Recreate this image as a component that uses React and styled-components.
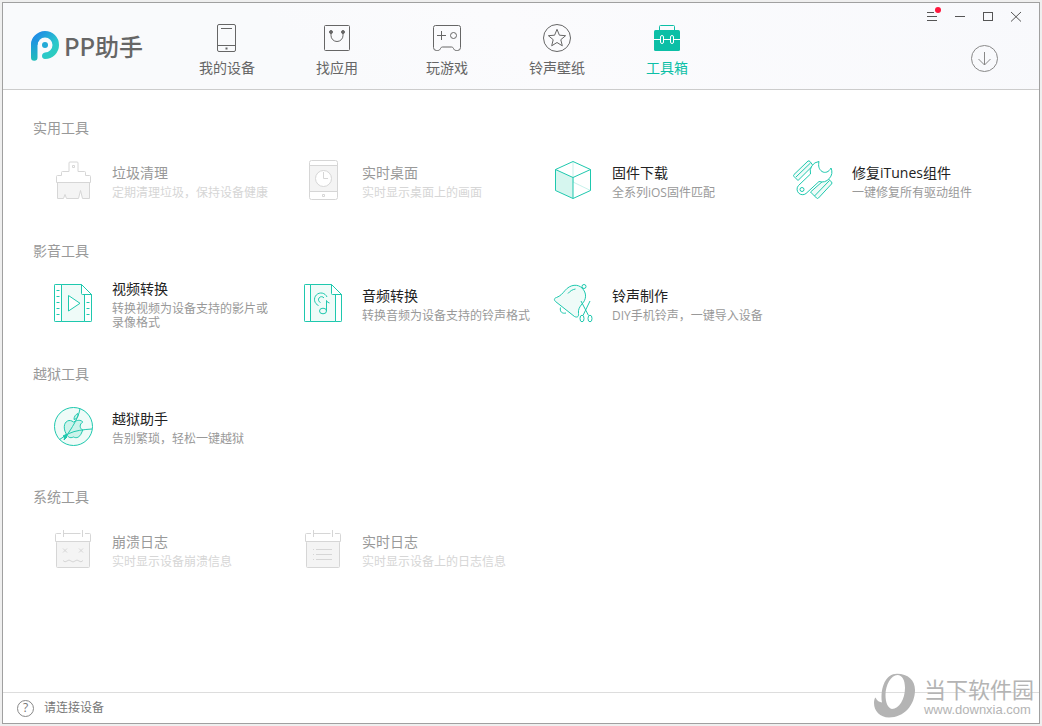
import React, { useState } from "react";
import styled, { createGlobalStyle } from "styled-components";

const GlobalStyle = createGlobalStyle`
  * {
    box-sizing: border-box;
  }
  body {
    margin: 0;
    background: #efefef;
    font-family: "Open Sans", "Noto Sans CJK SC", sans-serif;
  }
  button {
    font-family: inherit;
  }
`;

const PhoneIcon = () => (
  <NavSvg viewBox="0 0 30 30">
    <rect x="5.5" y="1.5" width="18" height="27" rx="1.5" />
    <path d="M9 5.5h11M5.5 22.5h18" />
    <rect x="14" y="25" width="1" height="1" />
  </NavSvg>
);

const AppsIcon = () => (
  <NavSvg viewBox="0 0 30 30">
    <rect x="2.5" y="2.5" width="25" height="25" rx="1" />
    <path d="M9 9v3.500a6 6 0 0 0 12 0V9" />
    <circle cx="9" cy="9" r="1.500" fill="currentColor" />
    <circle cx="21" cy="9" r="1.500" fill="currentColor" />
  </NavSvg>
);

const GamesIcon = () => (
  <NavSvg viewBox="0 0 30 30">
    <path d="M3.500 2.500h23a2 2 0 0 1 2 2v20a3 3 0 0 1-3 3h-1c-2 0-2.500-1-3-2s-1-1.500-2-1.500h-9c-1 0-1.500.5-2 1.500s-1 2-3 2h-1a3 3 0 0 1-3-3v-20a2 2 0 0 1 2-2z" />
    <path d="M5 12.500h9M9.500 8v9" />
    <circle cx="21.500" cy="12.500" r="3" />
  </NavSvg>
);

const RingtoneIcon = () => (
  <NavSvg viewBox="0 0 30 30">
    <circle cx="15" cy="15" r="13.500" />
    <path d="M15 6.300l2.400 5.900 6.200.5-4.800 4 1.500 6.100-5.300-3.300-5.300 3.300 1.500-6.100-4.800-4 6.200-.5z" />
  </NavSvg>
);

const ToolboxIcon = () => (
  <NavSvg viewBox="0 0 30 30">
    <rect x="7.500" y="2.500" width="15" height="6" rx="1" />
    <rect x="2" y="7" width="26" height="21" rx="1.500" fill="currentColor" stroke="none" />
    <path d="M2 16.500h26" stroke="#fff" />
    <rect x="8.500" y="12.500" width="3" height="8" rx="1.500" fill="#0cbfa6" stroke="#fff" />
    <rect x="18.500" y="12.500" width="3" height="8" rx="1.500" fill="#0cbfa6" stroke="#fff" />
  </NavSvg>
);

const CleanIcon = () => (
  <ToolSvg viewBox="0 0 40 40">
    <path d="M4.500 22.500h32v16h-7l-2-8-2 8h-12l-1.500-4-1.500 4h-6z" fill="#f4f4f4" />
    <path d="M3.500 22.500v-6a1 1 0 0 1 1-1h4v-3a1 1 0 0 1 1-1h6.500v-8.500a1 1 0 0 1 1-1h7a1 1 0 0 1 1 1v8.500h6.500a1 1 0 0 1 1 1v3h4a1 1 0 0 1 1 1v6z" fill="#fff" />
    <rect x="19.500" y="5.500" width="2" height="2" />
  </ToolSvg>
);

const DesktopIcon = () => (
  <ToolSvg viewBox="0 0 40 40">
    <rect x="6.500" y=".5" width="28" height="39" rx="2" />
    <rect x="6.500" y="5.500" width="28" height="26" fill="#f4f4f4" />
    <circle cx="20.500" cy="18.500" r="8" fill="#fff" />
    <path d="M20.500 12v6.500h4.500" />
    <rect x="19.500" y="34.500" width="2" height="2" />
  </ToolSvg>
);

const FirmwareIcon = () => (
  <ToolSvg viewBox="0 0 40 40">
    <path d="M20 1.500V22L2.500 30.500M20 22l17.500 8.500" opacity=".25" />
    <path d="M2.500 9.500L20 17.500v21l-17.500-8z" fill="#d6f6ef" />
    <path d="M20 1.500l17.500 8v21L20 38.500M2.500 9.500L20 1.500M20 17.500l17.500-8" />
  </ToolSvg>
);

const RepairIcon = () => (
  <ToolSvg viewBox="0 0 40 40">
    <path d="M15 1L1 14.500q-1 1 0 2l4 4L20 5.500 17 1.500q-1-1-2-.5z" fill="#effbf8" />
    <path d="M3 17L17.500 3" />
    <path d="M34 17.500l4.500 4.500q1 1 0 2L25.500 38q-1 1-2 0l-6-6z" fill="#effbf8" />
    <path d="M21.500 36L36.500 20.500" />
    <path d="M26 1.500A10 10 0 0 0 17.500 14L5.500 25.500a5.500 5.500 0 0 0 7.500 8L26 21.500A10 10 0 0 0 38 8C36 12 32 13.500 29 11.500S25 6 26 1.500z" fill="#fff" />
    <circle cx="9" cy="29.500" r="2" />
  </ToolSvg>
);

const VideoIcon = () => (
  <ToolSvg viewBox="0 0 40 40">
    <path d="M28.500 1.500h-26a1 1 0 0 0-1 1v35a1 1 0 0 0 1 1h35a1 1 0 0 0 1-1v-26z" fill="#effbf8" />
    <path d="M1.500 2.500v35a1 1 0 0 0 1 1h6v-37h-6a1 1 0 0 0-1 1zM31.500 11.500v27h6a1 1 0 0 0 1-1v-26z" fill="#fff" />
    <path d="M28.500 1.500v9a1 1 0 0 0 1 1h9z" fill="#fff" />
    <path d="M3.500 7.500h3M3.500 13.500h3M3.500 19.500h3M3.500 25.500h3M3.500 31.500h3M33.500 19.500h3M33.500 25.500h3M33.500 31.500h3" />
    <path d="M15.500 12.500v15.500l11.500-7.700z" fill="#fff" />
  </ToolSvg>
);

const AudioIcon = () => (
  <ToolSvg viewBox="0 0 40 40">
    <path d="M28.500 1.500h-26a1 1 0 0 0-1 1v35a1 1 0 0 0 1 1h35a1 1 0 0 0 1-1v-26z" fill="#effbf8" />
    <path d="M1.500 2.500v35a1 1 0 0 0 1 1h5v-37h-5a1 1 0 0 0-1 1zM32.500 11.500v27h5a1 1 0 0 0 1-1v-26z" fill="#fff" />
    <path d="M28.500 1.500v9a1 1 0 0 0 1 1h9z" fill="#fff" />
    <path d="M15.500 22.500a6.500 6.500 0 1 1 8.500-8.500M17.500 19.500a3 3 0 1 1 3.500-4.500" />
    <path d="M23.500 28V17.500q.5 2 3 2.500" />
    <ellipse cx="20" cy="28" rx="3.500" ry="2.800" />
  </ToolSvg>
);

const BellIcon = () => (
  <ToolSvg viewBox="0 0 40 40">
    <path d="M7.500 24.500c-1 4 1.500 6.500 5.500 5.500" />
    <path d="M3.500 14.500c4-1.500 6-4 8.500-7 5.500-6.500 13-6.500 17-2.500 5 5 4.500 11.500 0 16-2.500 3-4 5.500-3.500 9.500.5 4-2 4-4 3L2.500 18.500c-2-2-1-3.500 1-4z" fill="#effbf8" />
    <path d="M15 10.500c2-2.500 4.500-4 7.500-4.500" />
    <circle cx="31" cy="3.500" r="2" fill="#fff" />
    <path d="M28 18l7.500 14.500M37 18l-7 14.500" />
    <ellipse cx="29" cy="35.500" rx="2" ry="3.300" fill="#fff" />
    <ellipse cx="37" cy="35.500" rx="2" ry="3.300" fill="#fff" />
  </ToolSvg>
);

const JailbreakIcon = () => (
  <ToolSvg viewBox="0 0 40 40">
    <circle cx="20.500" cy="20.500" r="19" fill="#effbf8" />
    <path d="M20.500 16c-2-1.500-4-2-6-1-4 2-4 8-1.500 12.500 2 4 4 5 7.500 3.500 3 1.500 6 .5 8-4l1.300-3c-3.500-1.500-3.500-6 0-8-2.300-2.500-5.300-2-9.300 0z" fill="#ccf3eb" />
    <path d="M21 13.500c0-3 1.500-5 4-6 .5 3-1 5.500-4 6z" fill="#ccf3eb" />
    <path d="M27 2.500c-1 7-5 14-9 20.500l-6 9M39 23c-8 .5-17 1.500-23 4.500l-9.500 6" />
    <path d="M10 30l4-2-1 4zM11 34l1-4 2 1z" fill="currentColor" />
  </ToolSvg>
);

const CalendarBase = ({ children }) => (
  <ToolSvg viewBox="0 0 40 40">
    <rect x="3.500" y="12.500" width="33" height="26" rx="1" fill="#f4f4f4" />
    <path d="M8 4.500H3.500a1 1 0 0 0-1 1v7h35v-7a1 1 0 0 0-1-1H32M10.500 4.500h17M10.500 1v7M29.500 1v7" fill="none" />
    {children}
  </ToolSvg>
);

const CrashIcon = () => (
  <CalendarBase>
    <path d="M10 19.500l4 4M14 19.500l-4 4M26 19.500l4 4M30 19.500l-4 4" />
    <path d="M10 31.500q2 2.500 4 .5t4 0 4 0 4 0 4-.5" />
  </CalendarBase>
);

const LogIcon = () => (
  <CalendarBase>
    <path d="M10 20.500h1M13 20.500h16M10 25.500h1M13 25.500h16M10 30.500h1M13 30.500h16" />
  </CalendarBase>
);

const navItems = [
  { id: "device", label: "我的设备", icon: <PhoneIcon /> },
  { id: "apps", label: "找应用", icon: <AppsIcon /> },
  { id: "games", label: "玩游戏", icon: <GamesIcon /> },
  { id: "ringtones", label: "铃声壁纸", icon: <RingtoneIcon /> },
  { id: "toolbox", label: "工具箱", icon: <ToolboxIcon /> },
];

const sections = [
  {
    title: "实用工具",
    tools: [
      { name: "垃圾清理", desc: "定期清理垃圾，保持设备健康", icon: <CleanIcon />, disabled: true },
      { name: "实时桌面", desc: "实时显示桌面上的画面", icon: <DesktopIcon />, disabled: true },
      { name: "固件下载", desc: "全系列iOS固件匹配", icon: <FirmwareIcon /> },
      { name: "修复iTunes组件", desc: "一键修复所有驱动组件", icon: <RepairIcon /> },
    ],
  },
  {
    title: "影音工具",
    tools: [
      { name: "视频转换", desc: "转换视频为设备支持的影片或\n录像格式", icon: <VideoIcon /> },
      { name: "音频转换", desc: "转换音频为设备支持的铃声格式", icon: <AudioIcon /> },
      { name: "铃声制作", desc: "DIY手机铃声，一键导入设备", icon: <BellIcon /> },
    ],
  },
  {
    title: "越狱工具",
    tools: [
      { name: "越狱助手", desc: "告别繁琐，轻松一键越狱", icon: <JailbreakIcon /> },
    ],
  },
  {
    title: "系统工具",
    tools: [
      { name: "崩溃日志", desc: "实时显示设备崩溃信息", icon: <CrashIcon />, disabled: true },
      { name: "实时日志", desc: "实时显示设备上的日志信息", icon: <LogIcon />, disabled: true },
    ],
  },
];

const App = () => {
  const [active, setActive] = useState("toolbox");

  return (
    <>
      <GlobalStyle />
      <Window>
        <Header>
          <Logo>
            <LogoMark viewBox="0 0 28 30">
              <defs>
                <linearGradient id="pp-a" x1="0" y1="0" x2="1" y2="1">
                  <stop offset="0.15" stopColor="#1f8ce6" />
                  <stop offset="0.65" stopColor="#2bc8cb" />
                  <stop offset="1" stopColor="#2fd0b4" />
                </linearGradient>
                <linearGradient id="pp-b" x1="0" y1="0" x2="0" y2="1">
                  <stop offset="0" stopColor="#1f8ce6" />
                  <stop offset="0.5" stopColor="#20a5d2" />
                  <stop offset="1" stopColor="#1fbdb9" />
                </linearGradient>
              </defs>
              <path d="M14 0a14 14 0 0 1 0 28c-4 0-4-6 0-6.500a7.500 7.500 0 1 0-7.500-7.500L0 15A14 14 0 0 1 14 0z" fill="url(#pp-a)" />
              <path d="M0 14a14 14 0 0 1 3-8.500c1.500 2 3.500 3 5.500 3.500-1.500 1.500-2 3-2 5v12.500a3.250 3.250 0 0 1-6.500 0z" fill="url(#pp-b)" />
              <circle cx="14" cy="14" r="3" fill="#22a9d6" />
            </LogoMark>
            PP助手
          </Logo>
          <Nav>
            {navItems.map((item) => (
              <NavLink
                key={item.id}
                href={`#${item.id}`}
                $active={item.id === active}
                onClick={() => setActive(item.id)}
              >
                {item.icon}
                {item.label}
              </NavLink>
            ))}
          </Nav>
          <HeaderRight>
            <WindowControls>
              <ControlButton aria-label="菜单">
                <ControlSvg viewBox="0 0 28 28">
                  <path d="M9 9.500h7M9 13.500h10M9 17.500h10" />
                </ControlSvg>
                <Badge />
              </ControlButton>
              <ControlButton aria-label="最小化">
                <ControlSvg viewBox="0 0 28 28">
                  <path d="M9 13.500h10" />
                </ControlSvg>
              </ControlButton>
              <ControlButton aria-label="最大化">
                <ControlSvg viewBox="0 0 28 28">
                  <rect x="9.500" y="9.500" width="9" height="8" />
                </ControlSvg>
              </ControlButton>
              <ControlButton aria-label="关闭">
                <ControlSvg viewBox="0 0 28 28">
                  <path d="M9 9l10 9.500M19 9L9 18.500" />
                </ControlSvg>
              </ControlButton>
            </WindowControls>
            <DownloadButton aria-label="下载">
              <ControlSvg viewBox="0 0 28 28">
                <circle cx="13.500" cy="13.500" r="13" />
                <path d="M13.500 7v13M7.500 14l6 6 6-6" />
              </ControlSvg>
            </DownloadButton>
          </HeaderRight>
        </Header>
        <Main>
          {sections.map((section) => (
            <Section key={section.title}>
              <SectionTitle>{section.title}</SectionTitle>
              <ToolGrid>
                {section.tools.map((tool) => (
                  <Tool key={tool.name} disabled={tool.disabled}>
                    {tool.icon}
                    <ToolText>
                      <ToolName>{tool.name}</ToolName>
                      <ToolDesc>{tool.desc}</ToolDesc>
                    </ToolText>
                  </Tool>
                ))}
              </ToolGrid>
            </Section>
          ))}
        </Main>
        <Footer>
          <HelpButton aria-label="帮助">?</HelpButton>
          请连接设备
        </Footer>
        <Watermark>
          <WatermarkLogo viewBox="0 0 42 46">
            <path
              fillRule="evenodd"
              d="M23 .7C34 .7 41 7 41 17c0 15-11 27.500-26 27.500C6 44.500 0 38 0 30c0-2 .3-4.500 1.500-5.500 1.500 3.500 4 4.500 6.500 5C6 14 12 .7 23 .7zM23.500 2C17 2 11.500 12 11.500 22c0 8 2.500 13 6.500 14 7 0 13-10 13-21 0-8-3-13-7.500-13z"
            />
          </WatermarkLogo>
          <WatermarkText>
            <WatermarkName>当下软件园</WatermarkName>
            <WatermarkUrl>www.downxia.com</WatermarkUrl>
          </WatermarkText>
        </Watermark>
      </Window>
    </>
  );
};

const Window = styled.div`
  position: relative;
  display: flex;
  flex-direction: column;
  min-height: calc(100vh - 4px);
  margin: 2px;
  border: 1px solid #a0a0a0;
  background: #fff;
`;

const Header = styled.header`
  display: flex;
  height: 87px;
  border-bottom: 1px solid #ccc;
  background: linear-gradient(45deg, #f9fafc 30%, #fbfbfd 50%, #f8f9fc);
`;

const Logo = styled.div`
  display: flex;
  align-items: center;
  gap: 5px;
  width: 169px;
  padding-left: 28px;
  flex: none;
  font-family: "Noto Sans CJK SC", sans-serif;
  font-weight: 500;
  font-size: 24px;
  line-height: 28px;
  color: #666;
`;

const LogoMark = styled.svg`
  width: 28px;
  height: 30px;
`;

const Nav = styled.nav`
  display: flex;
`;

const NavLink = styled.a`
  display: flex;
  flex-direction: column;
  align-items: center;
  gap: 5px;
  width: 110px;
  padding-top: 20px;
  font-size: 14px;
  line-height: 20px;
  text-decoration: none;
  color: ${({ $active }) => ($active ? "#0cbfa6" : "#666")};
`;

const NavSvg = styled.svg`
  width: 30px;
  height: 30px;
  fill: none;
  stroke: currentColor;
`;

const HeaderRight = styled.div`
  display: flex;
  flex-direction: column;
  align-items: flex-end;
  gap: 14px;
  margin-left: auto;
`;

const WindowControls = styled.div`
  display: flex;
  padding-right: 9px;
`;

const ControlButton = styled.button`
  position: relative;
  width: 28px;
  height: 28px;
  padding: 0;
  border: none;
  background: none;
  color: #555;
  cursor: pointer;
`;

const ControlSvg = styled.svg`
  display: block;
  width: 28px;
  height: 28px;
  fill: none;
  stroke: currentColor;
`;

const Badge = styled.span`
  position: absolute;
  top: 4px;
  right: 5px;
  width: 6px;
  height: 6px;
  border-radius: 50%;
  background: #ff173d;
`;

const DownloadButton = styled.button`
  margin-right: 40px;
  padding: 0;
  border: none;
  background: none;
  color: #888;
  cursor: pointer;
`;

const Main = styled.main`
  flex: 1;
  padding: 28px 6px 0 30px;
`;

const Section = styled.section`
  margin-bottom: 41px;
`;

const SectionTitle = styled.h2`
  margin: 0 0 22px;
  font-weight: 400;
  font-size: 14px;
  line-height: 20px;
  color: #999;
`;

const ToolGrid = styled.div`
  display: grid;
  grid-template-columns: 25fr 25fr 24fr 24fr;
  grid-auto-rows: 40px;
  padding-left: 20px;
`;

const Tool = styled.button`
  display: flex;
  align-items: center;
  gap: 19px;
  height: 40px;
  padding: 0;
  border: none;
  background: none;
  text-align: left;
  color: #1ec8ae;
  cursor: pointer;
  &:disabled {
    color: #d6d6d6;
    cursor: default;
  }
`;

const ToolSvg = styled.svg`
  flex: none;
  width: 40px;
  height: 40px;
  fill: none;
  stroke: currentColor;
  stroke-linejoin: round;
`;

const ToolText = styled.span`
  display: flex;
  flex-direction: column;
  gap: 3px;
  padding-top: 3px;
`;

const ToolName = styled.span`
  font-size: 14px;
  line-height: 20px;
  color: #222;
  ${Tool}:disabled & {
    color: #999;
  }
`;

const ToolDesc = styled.span`
  font-size: 12px;
  line-height: 14px;
  white-space: pre-line;
  color: #999;
  ${Tool}:disabled & {
    color: #d6d6d6;
  }
`;

const Footer = styled.footer`
  display: flex;
  align-items: center;
  gap: 10px;
  height: 31px;
  padding-left: 14px;
  border-top: 1px solid #ddd;
  font-size: 12px;
  line-height: 18px;
  color: #777;
`;

const HelpButton = styled.button`
  width: 17px;
  height: 17px;
  padding: 0;
  border: 1px solid #888;
  border-radius: 50%;
  background: none;
  font-size: 12px;
  line-height: 14px;
  color: #777;
`;

const Watermark = styled.div`
  position: absolute;
  right: 5px;
  bottom: 4px;
  display: flex;
  align-items: center;
  gap: 8px;
  color: #b4b4b4;
`;

const WatermarkLogo = styled.svg`
  width: 42px;
  height: 46px;
  fill: currentColor;
`;

const WatermarkText = styled.div`
  display: flex;
  flex-direction: column;
`;

const WatermarkName = styled.span`
  font-family: "Noto Sans CJK SC", sans-serif;
  font-size: 22px;
  line-height: 28px;
`;

const WatermarkUrl = styled.span`
  font-family: "Liberation Sans", Arial, sans-serif;
  font-size: 13px;
  line-height: 16px;
`;

export default App;
